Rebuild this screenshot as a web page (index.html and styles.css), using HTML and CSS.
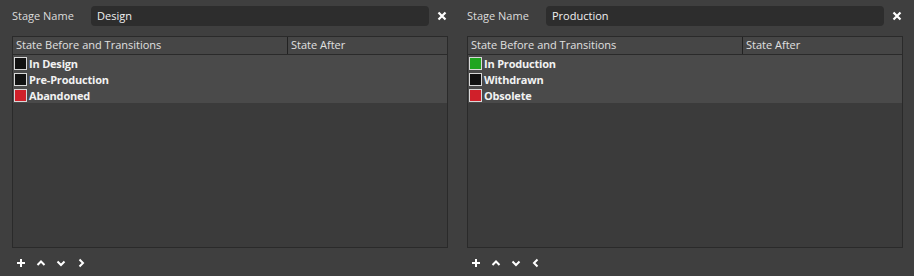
FILE: index.html
```html
<!DOCTYPE html>
<html>
<head>
    <title>Lifecycle Stages</title>
    <link rel="stylesheet" href="styles.css">
</head>
<body>
    <div class="stages">
        <div class="stage">
            <div class="name-row">
                <span class="label">Stage Name</span>
                <input type="text" class="name-input" value="Design">
                <button class="remove">
                    <svg width="10" height="10" viewBox="0 0 10 10"><path d="M1.5 1.5 L8.5 8.5 M8.5 1.5 L1.5 8.5" stroke="#fff" stroke-width="2.2"/></svg>
                </button>
            </div>
            <div class="grid">
                <div class="grid-head">
                    <div class="col-before">State Before and Transitions</div>
                    <div class="col-after">State After</div>
                </div>
                <div class="grid-rows">
                    <div class="state"><span class="swatch black"></span>In Design</div>
                    <div class="state"><span class="swatch black"></span>Pre-Production</div>
                    <div class="state"><span class="swatch red"></span>Abandoned</div>
                </div>
            </div>
            <div class="tools">
                <svg width="10" height="10" viewBox="0 0 10 10"><path d="M5 1 V9 M1 5 H9" stroke="#fff" stroke-width="2"/></svg>
                <svg width="10" height="10" viewBox="0 0 10 10"><path d="M1.5 7 L5 3.5 L8.5 7" stroke="#fff" stroke-width="2" fill="none"/></svg>
                <svg width="10" height="10" viewBox="0 0 10 10"><path d="M1.5 3.5 L5 7 L8.5 3.5" stroke="#fff" stroke-width="2" fill="none"/></svg>
                <svg width="10" height="10" viewBox="0 0 10 10"><path d="M3.5 1.5 L7 5 L3.5 8.5" stroke="#fff" stroke-width="2" fill="none"/></svg>
            </div>
        </div>

        <div class="stage">
            <div class="name-row">
                <span class="label">Stage Name</span>
                <input type="text" class="name-input" value="Production">
                <button class="remove">
                    <svg width="10" height="10" viewBox="0 0 10 10"><path d="M1.5 1.5 L8.5 8.5 M8.5 1.5 L1.5 8.5" stroke="#fff" stroke-width="2.2"/></svg>
                </button>
            </div>
            <div class="grid">
                <div class="grid-head">
                    <div class="col-before">State Before and Transitions</div>
                    <div class="col-after">State After</div>
                </div>
                <div class="grid-rows">
                    <div class="state"><span class="swatch green"></span>In Production</div>
                    <div class="state"><span class="swatch black"></span>Withdrawn</div>
                    <div class="state"><span class="swatch red"></span>Obsolete</div>
                </div>
            </div>
            <div class="tools">
                <svg width="10" height="10" viewBox="0 0 10 10"><path d="M5 1 V9 M1 5 H9" stroke="#fff" stroke-width="2"/></svg>
                <svg width="10" height="10" viewBox="0 0 10 10"><path d="M1.5 7 L5 3.5 L8.5 7" stroke="#fff" stroke-width="2" fill="none"/></svg>
                <svg width="10" height="10" viewBox="0 0 10 10"><path d="M1.5 3.5 L5 7 L8.5 3.5" stroke="#fff" stroke-width="2" fill="none"/></svg>
                <svg width="10" height="10" viewBox="0 0 10 10"><path d="M6.5 1.5 L3 5 L6.5 8.5" stroke="#fff" stroke-width="2" fill="none"/></svg>
            </div>
        </div>
    </div>
</body>
</html>
```

FILE: styles.css
```css
body {
    margin: 0;
    background-color: #3f3f3f;
    font-family: "Open Sans", "Noto Sans", sans-serif;
    font-size: 11px;
    color: #e6e6e6;
}
.stages {
    display: flex;
    gap: 19px;
    padding: 5px 11px 0 12px;
}
.stage {
    width: 436px;
}
.name-row {
    display: flex;
    align-items: center;
    height: 21px;
}
.label {
    width: 79px;
    color: #dcdcdc;
}
.name-input {
    width: 338px;
    height: 20px;
    box-sizing: border-box;
    border: none;
    border-radius: 4px;
    background-color: #2d2d2d;
    color: #f0f0f0;
    font-family: inherit;
    font-size: 11px;
    padding: 0 6px;
    outline: none;
}
.remove {
    border: none;
    background: none;
    padding: 0;
    margin-left: 8px;
    width: 10px;
    height: 10px;
    display: flex;
}
.grid {
    margin-top: 10px;
    height: 210px;
    border: 1px solid #2a2a2a;
    background-color: #3b3b3b;
    display: flex;
    flex-direction: column;
}
.grid-head {
    display: flex;
    height: 17px;
    line-height: 16px;
    background-color: #464646;
    border-bottom: 1px solid #2a2a2a;
    color: #e0e0e0;
}
.col-before {
    width: 271px;
    padding-left: 3px;
    border-right: 1px solid #222;
}
.col-after {
    padding-left: 3px;
}
.grid-rows {
    background-color: #4a4a4a;
}
.state {
    display: flex;
    align-items: center;
    height: 16px;
    padding-left: 1px;
    font-weight: bold;
    letter-spacing: -0.2px;
    color: #f2f2f2;
}
.swatch {
    width: 11px;
    height: 11px;
    border: 1px solid #d8d8d8;
    margin-right: 2px;
}
.black {
    background-color: #111;
}
.red {
    background-color: #d0202a;
}
.green {
    background-color: #1fa51f;
}
.tools {
    display: flex;
    gap: 10px;
    padding: 10px 0 0 4px;
}
```
